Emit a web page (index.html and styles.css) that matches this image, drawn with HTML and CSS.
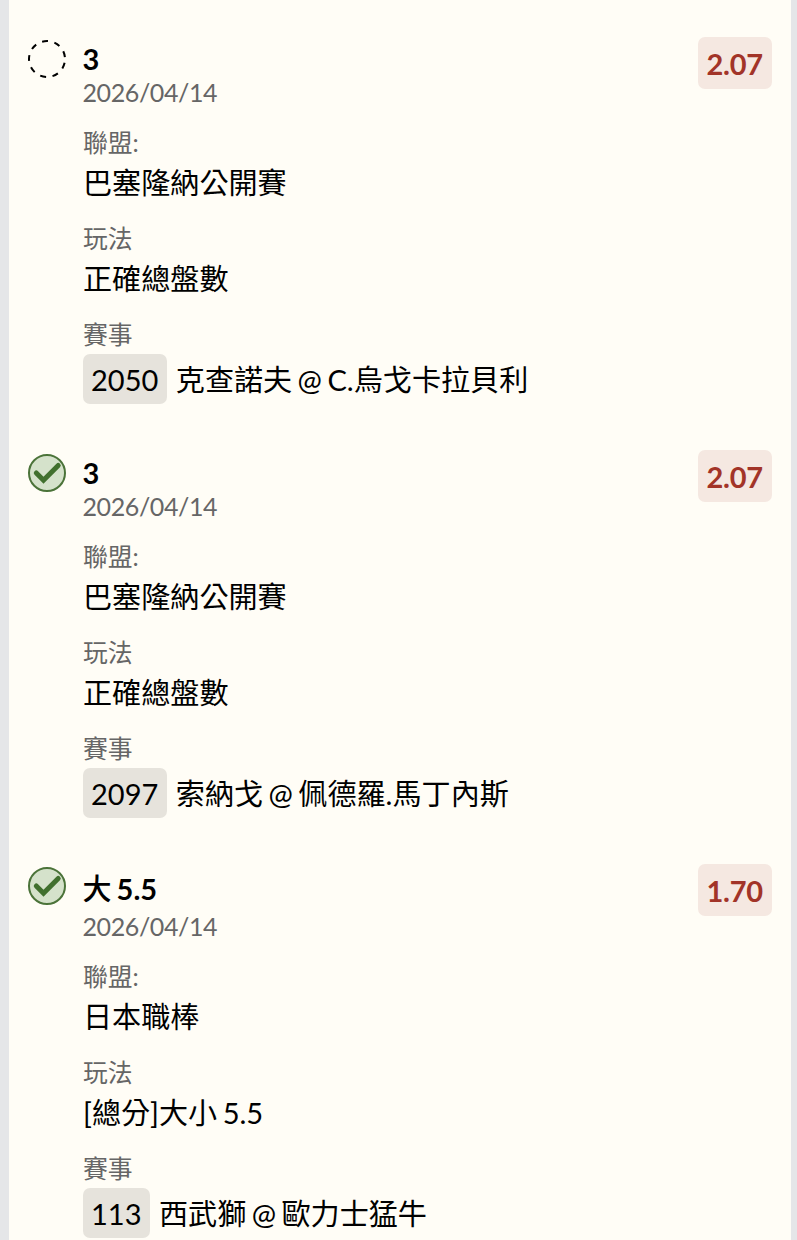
FILE: index.html
```html
<!DOCTYPE html>
<html lang="zh-Hant">

<head>
    <meta charset="UTF-8">
    <meta name="viewport" content="width=device-width, initial-scale=1.0">
    <title>投注明細</title>
    <link rel="stylesheet" href="styles.css">
</head>

<body>

    <div class="ticket">
        <div class="bet">
            <svg class="status" viewBox="0 0 40 40">
                <circle cx="20" cy="20" r="18" fill="none" stroke="#000" stroke-width="2" stroke-dasharray="6 6.566" stroke-dashoffset="-3.9" />
            </svg>
            <div class="info">
                <h3 class="pick">3</h3>
                <div class="date">2026/04/14</div>
                <div class="label">聯盟:</div>
                <div class="value">巴塞隆納公開賽</div>
                <div class="label">玩法</div>
                <div class="value">正確總盤數</div>
                <div class="label">賽事</div>
                <div class="match"><span class="code">2050</span><span class="teams">克查諾夫 @ C.烏戈卡拉貝利</span></div>
            </div>
            <div class="odds">2.07</div>
        </div>

        <div class="bet">
            <svg class="status" viewBox="0 0 40 40">
                <circle cx="20" cy="20" r="18" fill="#d5e2cb" stroke="#4b7339" stroke-width="2" />
                <path d="M9.3 20l7.2 7.2 14.7-14.7" fill="none" stroke="#41702e" stroke-width="5" stroke-linecap="round" />
            </svg>
            <div class="info">
                <h3 class="pick">3</h3>
                <div class="date">2026/04/14</div>
                <div class="label">聯盟:</div>
                <div class="value">巴塞隆納公開賽</div>
                <div class="label">玩法</div>
                <div class="value">正確總盤數</div>
                <div class="label">賽事</div>
                <div class="match"><span class="code">2097</span><span class="teams">索納戈 @ 佩德羅.馬丁內斯</span></div>
            </div>
            <div class="odds">2.07</div>
        </div>

        <div class="bet">
            <svg class="status" viewBox="0 0 40 40">
                <circle cx="20" cy="20" r="18" fill="#d5e2cb" stroke="#4b7339" stroke-width="2" />
                <path d="M9.3 20l7.2 7.2 14.7-14.7" fill="none" stroke="#41702e" stroke-width="5" stroke-linecap="round" />
            </svg>
            <div class="info">
                <h3 class="pick pick-tall"><span class="han">大</span> 5.5</h3>
                <div class="date">2026/04/14</div>
                <div class="label">聯盟:</div>
                <div class="value">日本職棒</div>
                <div class="label">玩法</div>
                <div class="value">[總分]大小 5.5</div>
                <div class="label">賽事</div>
                <div class="match"><span class="code">113</span><span class="teams">西武獅 @ 歐力士猛牛</span></div>
            </div>
            <div class="odds">1.70</div>
        </div>
    </div>

</body>

</html>
```

FILE: styles.css
```css
* {
    box-sizing: border-box;
}

body {
    margin: 0;
    height: 1240px;
    overflow: hidden;
    background-color: #e5e6e8;
    font-family: Lato, "Noto Sans CJK TC", sans-serif;
    color: #000;
}

.ticket {
    height: 1240px;
    margin: 0 6px 0 9px;
    padding: 36.5px 19px 0 18px;
    background-color: #fffdf6;
    overflow: hidden;
    word-spacing: -2px;
}

.bet {
    display: flex;
    align-items: flex-start;
    margin-bottom: 46px;
}

.status {
    width: 40px;
    height: 40px;
    margin-top: 2.5px;
    margin-right: 15.5px;
    flex: none;
}

.info {
    flex: 1;
    padding-top: 5.5px;
}

.pick {
    margin: 0;
    font-size: 29px;
    line-height: 34px;
}

.pick-tall {
    line-height: 40px;
}

.han {
    font-weight: 500;
}

.date {
    font-size: 25px;
    line-height: 32px;
    letter-spacing: -0.4px;
    color: #666;
}

.pick-tall + .date {
    padding-top: 1px;
}

.label {
    margin-top: 17px;
    margin-bottom: -1px;
    font-size: 24.8px;
    line-height: 36px;
    color: #666;
}

.value {
    padding-top: 1px;
    margin-bottom: -1px;
    font-size: 29.1px;
    line-height: 44px;
}

.label,
.value {
    padding-left: 0.5px;
}

.match {
    display: flex;
    align-items: flex-start;
    height: 50px;
    margin-top: 2px;
    font-size: 29px;
    line-height: 50px;
}

.teams {
    font-size: 29.1px;
    line-height: 51px;
}

.code {
    height: 50px;
    line-height: 51px;
    margin-right: 9px;
    padding: 0 8.5px;
    border-radius: 7px;
    background-color: #e6e3dc;
}

.odds {
    height: 52px;
    line-height: 53px;
    padding: 0 9px 0 8.5px;
    border-radius: 7px;
    background-color: #f5e8e1;
    color: #a23428;
    font-size: 29px;
    font-weight: bold;
    letter-spacing: -0.2px;
}
```
